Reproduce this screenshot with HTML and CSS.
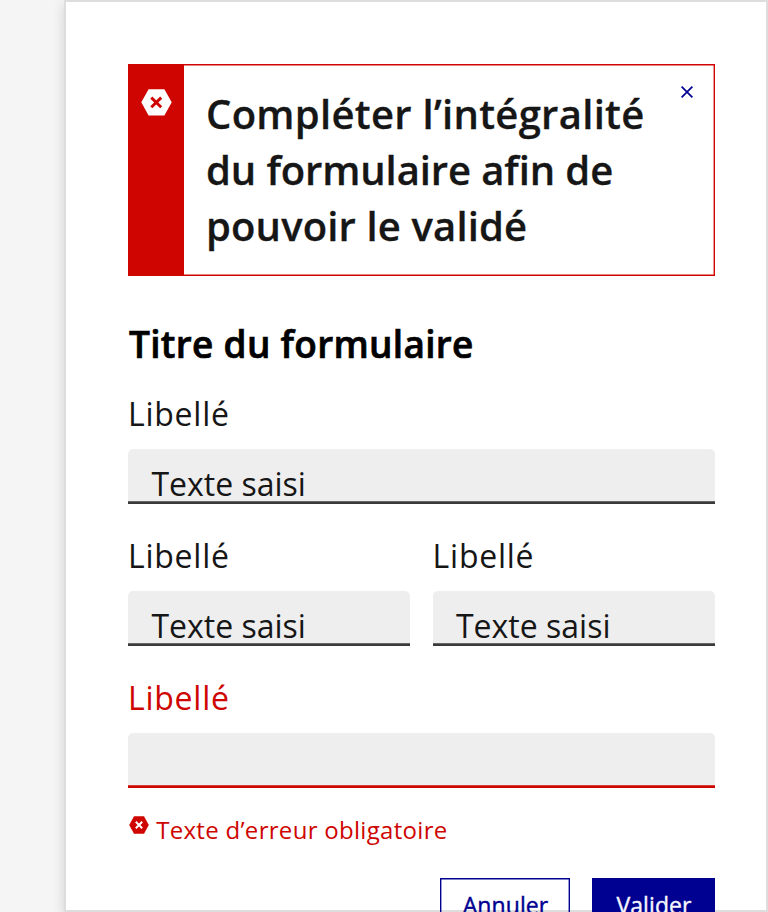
FILE: index.html
```
<!DOCTYPE html>
<html lang="fr">
<head>
<meta charset="utf-8">
<title>Formulaire</title>
<link rel="stylesheet" href="styles.css">
</head>
<body>
<main class="card">
  <div class="alert">
    <div class="alert-side">
      <svg class="alert-icon" viewBox="0 0 31 27"><path fill="#fff" d="M7.6.3h15.8L30.7 13.3l-7.3 13.2H7.6L.3 13.3z"/><path stroke="#ce0500" stroke-width="2.9" d="M10.3 8.6l9.9 9.6m0-9.6l-9.9 9.6"/></svg>
    </div>
    <h2 class="alert-title"><span class="l1">Compléter l’intégralité</span><br><span class="l2">du formulaire afin de</span><br><span class="l3">pouvoir le validé</span></h2>
    <svg class="alert-close" viewBox="0 0 12 12"><path stroke="#000091" stroke-width="1.7" d="M.6.6l10.8 10.8M11.4.6L.6 11.4"/></svg>
  </div>
  <h1 class="title">Titre du formulaire</h1>
  <form class="form">
    <div class="field"><div class="label">Libellé</div><div class="input">Texte saisi</div></div>
    <div class="row">
      <div class="field"><div class="label">Libellé</div><div class="input">Texte saisi</div></div>
      <div class="field"><div class="label">Libellé</div><div class="input">Texte saisi</div></div>
    </div>
    <div class="field field-error"><div class="label">Libellé</div><div class="input"></div></div>
  </form>
  <p class="error">
    <svg class="error-icon" viewBox="0 0 20 18"><path fill="#ce0500" d="M5 .3h10L19.8 9 15 17.7H5L.2 9z"/><path stroke="#fff" stroke-width="2" d="M6.8 5.8l6.4 6.4m0-6.4l-6.4 6.4"/></svg>
    <span>Texte d’erreur obligatoire</span>
  </p>
  <div class="actions"><div class="btn">Annuler</div><div class="btn btn-primary">Valider</div></div>
</main>
</body>
</html>
```
FILE: styles.css
```
* { box-sizing: border-box; }
html, body { height: 100%; }
body {
  margin: 0;
  padding-left: 64px;
  overflow: hidden;
  background: #f5f5f5;
  color: #161616;
  font-family: "Open Sans", sans-serif;
}
.card {
  height: 912px;
  padding: 62px 51.2px 0 62px;
  background: #fff;
  border: 2px solid #ddd;
  box-shadow: 0 4px 12px rgba(0, 0, 0, .15);
}
.alert {
  display: flex;
  height: 212.4px;
  box-shadow: inset 0 0 0 1.4px #ce0500;
}
.alert-side {
  width: 55.6px;
  padding: 25.4px 0 0 12.6px;
  background: #ce0500;
}
.alert-icon { display: block; width: 31px; height: 27px; }
.alert-title {
  flex: 1;
  margin: 0;
  padding: 21.5px 0 0 22.4px;
  font-size: 40px;
  font-weight: 600;
  line-height: 56px;
  white-space: nowrap;
  -webkit-text-stroke: .3px currentColor;
}
.l1 { letter-spacing: .3px; }
.l2 { letter-spacing: -.1px; }
.l3 { letter-spacing: .15px; }
.alert-close { width: 12px; height: 12px; margin: 21.7px 22px 0 0; }
.title {
  margin: 46px 0 30px;
  padding-left: 1px;
  color: #000;
  font-size: 37px;
  font-weight: 600;
  line-height: 44px;
  letter-spacing: .3px;
  -webkit-text-stroke: .7px currentColor;
}
.form { display: flex; flex-direction: column; gap: 34px; }
.row { display: grid; grid-template-columns: 1fr 1fr; gap: 22.4px; }
.label {
  padding-top: 1px;
  margin-bottom: 17.4px;
  font-size: 32px;
  line-height: 34px;
  letter-spacing: .75px;
}
.input {
  height: 55.6px;
  padding: 18.2px 0 0 23.4px;
  border-radius: 5px 5px 0 0;
  background: #eee;
  box-shadow: inset 0 -2.7px #3a3a3a;
  font-size: 32px;
  line-height: 34px;
}
.field-error .label { color: #ce0500; }
.field-error .input { box-shadow: inset 0 -2.7px #ce0500; }
.error {
  display: flex;
  gap: 7.2px;
  margin: 24.6px 0 31.5px;
  color: #ce0500;
  font-size: 24px;
  line-height: 34px;
  letter-spacing: .3px;
}
.error-icon { width: 20px; height: 18px; margin: 2.7px 0 0 1px; }
.actions { display: flex; justify-content: flex-end; gap: 22px; }
.btn {
  height: 56px;
  width: 130.4px;
  padding: 10px 0 0 1px;
  box-shadow: inset 0 0 0 1.4px #000091;
  color: #000091;
  font-size: 23px;
  line-height: 34px;
  letter-spacing: .1px;
  text-align: center;
  -webkit-text-stroke: .4px currentColor;
}
.btn-primary { width: 122.6px; background: #000091; color: #f5f5fe; }
```
